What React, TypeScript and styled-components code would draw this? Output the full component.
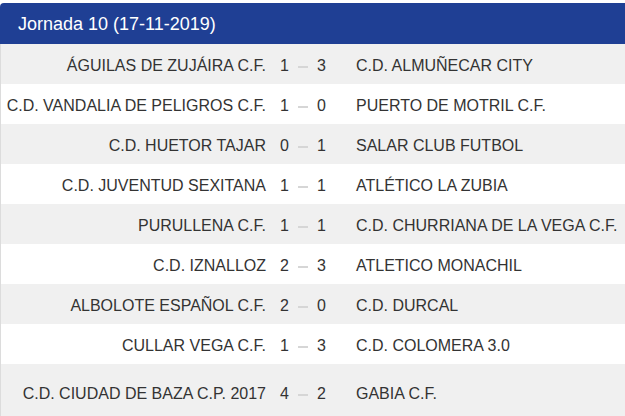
import React from "react";
import styled, { createGlobalStyle } from "styled-components";

const GlobalStyle = createGlobalStyle`
  body {
    margin: 0;
    background: #ffffff;
    font-family: "Liberation Sans", Arial, sans-serif;
  }
`;

const Panel = styled.div`
  width: 625px;
  padding-top: 3px;
`;

const Header = styled.div`
  height: 41px;
  display: flex;
  align-items: center;
  padding-left: 18px;
  padding-top: 1px;
  box-sizing: border-box;
  background: #1f3f94;
  color: #ffffff;
  font-size: 18px;
  border-top-left-radius: 4px;
`;

const Row = styled.div<{ $striped: boolean }>`
  display: grid;
  grid-template-columns: 265px 76px 1fr;
  align-items: center;
  height: 40px;
  padding-top: 3px;
  box-sizing: border-box;
  border-left: 1px solid #dcdcdc;
  background: ${(p) => (p.$striped ? "#f0f0f0" : "#ffffff")};
  color: #333333;
  font-size: 16px;

  &:last-child {
    height: 52px;
    padding-top: 8px;
  }
`;

const Home = styled.div`
  text-align: right;
  white-space: nowrap;
`;

const Away = styled.div`
  padding-left: 14px;
  white-space: nowrap;
`;

const Score = styled.div`
  display: flex;
  justify-content: center;
  align-items: center;
  gap: 9px;
  padding-right: 2px;
`;

const Dash = styled.span`
  display: inline-block;
  width: 10px;
  height: 2px;
  margin-top: 2px;
  background: #d6d6d6;
`;

const matches = [
  ["ÁGUILAS DE ZUJÁIRA C.F.", 1, 3, "C.D. ALMUÑECAR CITY"],
  ["C.D. VANDALIA DE PELIGROS C.F.", 1, 0, "PUERTO DE MOTRIL C.F."],
  ["C.D. HUETOR TAJAR", 0, 1, "SALAR CLUB FUTBOL"],
  ["C.D. JUVENTUD SEXITANA", 1, 1, "ATLÉTICO LA ZUBIA"],
  ["PURULLENA C.F.", 1, 1, "C.D. CHURRIANA DE LA VEGA C.F."],
  ["C.D. IZNALLOZ", 2, 3, "ATLETICO MONACHIL"],
  ["ALBOLOTE ESPAÑOL C.F.", 2, 0, "C.D. DURCAL"],
  ["CULLAR VEGA C.F.", 1, 3, "C.D. COLOMERA 3.0"],
  ["C.D. CIUDAD DE BAZA C.P. 2017", 4, 2, "GABIA C.F."],
] as const;

const App: React.FC = () => (
  <>
    <GlobalStyle />
    <Panel>
      <Header>Jornada 10 (17-11-2019)</Header>
      {matches.map(([home, hg, ag, away], i) => (
        <Row key={home} $striped={i % 2 === 0}>
          <Home>{home}</Home>
          <Score>
            <span>{hg}</span>
            <Dash />
            <span>{ag}</span>
          </Score>
          <Away>{away}</Away>
        </Row>
      ))}
    </Panel>
  </>
);

export default App;
